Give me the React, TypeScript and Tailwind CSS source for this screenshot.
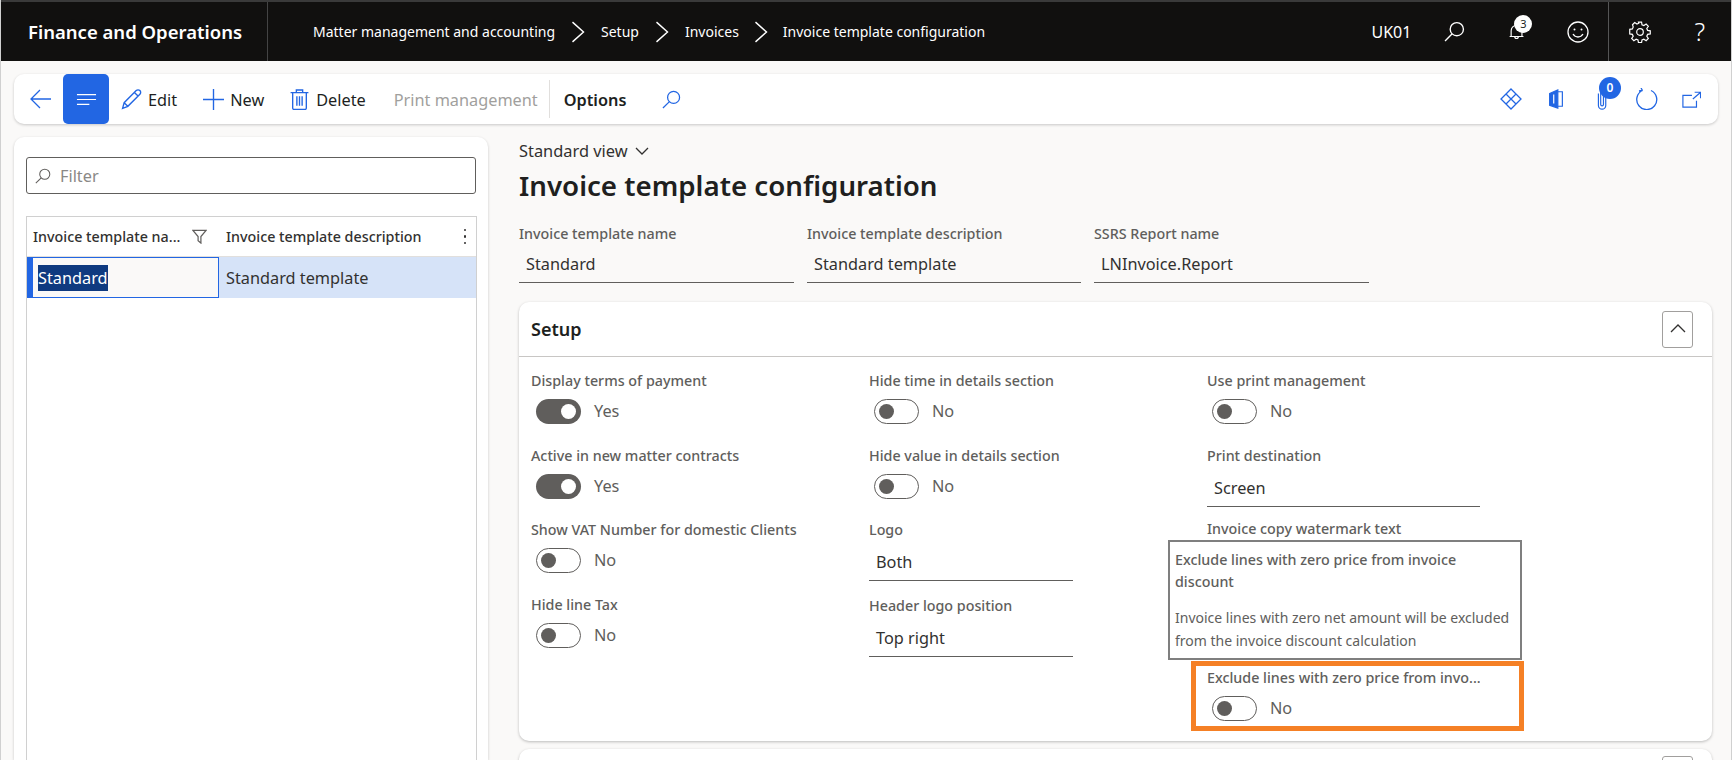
import type { ReactNode } from "react";

const blue = "#2266e3";

function Icon({ className, size = 20, children, stroke = "currentColor", vb = "0 0 20 20" }: { className?: string; size?: number; children: ReactNode; stroke?: string; vb?: string }) {
  return (
    <svg width={size} height={size} viewBox={vb} fill="none" stroke={stroke} strokeWidth="1.3" className={className}>
      {children}
    </svg>
  );
}

function SearchIcon({ size = 20, className }: { size?: number; className?: string }) {
  return (
    <Icon size={size} className={className}>
      <circle cx="12.2" cy="7.8" r="6.3" />
      <path d="M7.8 12.2 1 19" />
    </Icon>
  );
}

function Crumb({ className }: { className: string }) {
  return (
    <Icon size={22} className={className}>
      <path d="m5 1 10 9-10 9" />
    </Icon>
  );
}

function ToolButton({ icon, label, className }: { icon: ReactNode; label: string; className?: string }) {
  return (
    <div className={`flex items-center ${className ?? ""}`}>
      {icon}
      <span className="pt-[3px] text-[#201f1e]">{label}</span>
    </div>
  );
}

function Toggle({ on, className }: { on?: boolean; className?: string }) {
  return (
    <div className={`flex items-center ${className ?? ""}`}>
      {on ? (
        <div className="ml-[5px] flex h-[25px] w-[45px] items-center justify-end rounded-full bg-[#605e5c] pr-[5px]">
          <div className="size-[15px] rounded-full bg-white" />
        </div>
      ) : (
        <div className="ml-[5px] flex h-[25px] w-[45px] items-center rounded-full border border-[#605e5c] bg-white pl-[4px]">
          <div className="size-[15px] rounded-full bg-[#605e5c]" />
        </div>
      )}
      <span className="ml-[13px] text-[16.3px] leading-[31px] text-[#605e5c]">{on ? "Yes" : "No"}</span>
    </div>
  );
}

function Label({ children }: { children: ReactNode }) {
  return <div className="h-[22px] text-[14.3px] leading-[22px] font-medium whitespace-nowrap text-[#605e5c]">{children}</div>;
}

function ToggleField({ label, on }: { label: string; on?: boolean }) {
  return (
    <div className="h-[74.7px]">
      <Label>{label}</Label>
      <Toggle on={on} className="mt-[4px]" />
    </div>
  );
}

function InputField({ label, value, width, height = "h-[76px]" }: { label: string; value: string; width: string; height?: string }) {
  return (
    <div className={height}>
      <Label>{label}</Label>
      <div className={`mt-[4px] h-[36px] border-b border-[#605e5c] pl-[7px] text-[16.3px] leading-[34px] text-[#323130] ${width}`}>{value}</div>
    </div>
  );
}

function HeadField({ label, value, width }: { label: string; value: string; width: string }) {
  return (
    <div className={width}>
      <Label>{label}</Label>
      <div className="mt-[2px] h-[36px] border-b border-[#605e5c] pl-[7px] text-[16.3px] leading-[35px] text-[#323130]">{value}</div>
    </div>
  );
}

function TopBar() {
  return (
    <header className="flex h-[61px] shrink-0 items-center border-t-2 border-[#3a3a3a] bg-[#11100f] text-white">
      <div className="flex h-full w-[267px] items-center border-r border-[#444] pl-[27px] text-[18.5px] font-semibold whitespace-nowrap">Finance and Operations</div>
      <nav className="ml-[45px] flex items-center text-[14px] whitespace-nowrap">
        <span>Matter management and accounting</span>
        <Crumb className="mx-[12px]" />
        <span>Setup</span>
        <Crumb className="mx-[12px]" />
        <span>Invoices</span>
        <Crumb className="mx-[11px]" />
        <span>Invoice template configuration</span>
      </nav>
      <div className="ml-auto flex h-full items-center">
        <span className="text-[16px]">UK01</span>
        <SearchIcon size={21} className="ml-[33px]" />
        <div className="relative ml-[43px] flex h-full w-[22px] items-center">
          <Icon size={18}>
            <path d="M3.5 15V8.5a6 6 0 0 1 12 0V15M1.8 15h15.4M7.5 15c0 3 4 3 4 0" />
          </Icon>
          <div className="absolute top-[13px] left-[6px] flex size-[18px] items-center justify-center rounded-full bg-white text-[11px] text-[#201f1e]">3</div>
        </div>
        <Icon size={22} className="ml-[37px]" vb="0 0 22 22">
          <circle cx="11" cy="11" r="10" />
          <circle cx="7.5" cy="8.5" r="1" fill="white" stroke="none" />
          <circle cx="14.5" cy="8.5" r="1" fill="white" stroke="none" />
          <path d="M6 13c2.5 4 7.5 4 10 0" />
        </Icon>
        <div className="ml-[19px] h-full w-px bg-[#555]" />
        <Icon size={22} className="ml-[20px]" vb="0 0 24 24">
          <path d="M10.3 1.8h3.4l.5 2.9 2 .9 2.5-1.7 2.4 2.4-1.7 2.5.9 2 2.9.5v3.4l-2.9.5-.9 2 1.7 2.5-2.4 2.4-2.5-1.7-2 .9-.5 2.9h-3.4l-.5-2.9-2-.9-2.5 1.7-2.4-2.4 1.7-2.5-.9-2-2.9-.5V9.700l2.900-.5.900-2L3.800 4.700l2.400-2.400 2.500 1.700 2-.9z" transform="translate(0 -.6)" />
          <circle cx="12" cy="12" r="3.600" />
        </Icon>
        <span className="mr-[26px] ml-[43px] text-[25px] leading-none font-light">?</span>
      </div>
    </header>
  );
}

function Toolbar() {
  return (
    <div className="mx-[13px] mt-[13px] flex h-[50px] shrink-0 items-center rounded-[10px] bg-white text-[16.3px] shadow-[0_1px_3px_rgba(0,0,0,0.2)]">
      <Icon size={22} stroke={blue} className="ml-[16px]" vb="0 0 22 22">
        <path d="M21 11H1.500M10 2l-9 9 9 9" />
      </Icon>
      <div className="ml-[11px] flex h-full w-[46px] items-center justify-center rounded-[5px] bg-[#2266e3]">
        <Icon size={21} stroke="white" vb="0 0 22 22">
          <path d="M1 6h20M1 11h20M1 16h13" />
        </Icon>
      </div>
      <ToolButton
        className="ml-[12px]"
        label="Edit"
        icon={
          <Icon size={21} stroke={blue} className="mr-[6px]">
            <path d="M1.500 18.500 3 13 14.500 1.500a2 2 0 0 1 3.500 3.500L6.500 16.500zM3 13l3.500 3.500M13 3.500l3.500 3.500" />
          </Icon>
        }
      />
      <ToolButton
        className="ml-[26px]"
        label="New"
        icon={
          <Icon size={21} stroke={blue} className="mr-[6px]">
            <path d="M10 0v20M0 10h20" />
          </Icon>
        }
      />
      <ToolButton
        className="ml-[25px]"
        label="Delete"
        icon={
          <Icon size={21} stroke={blue} className="mr-[6px]">
            <path d="M1.500 3.500h17M7 3.500V1h6v2.500M3.500 3.500V18a1.500 1.500 0 0 0 1.500 1.500h10a1.500 1.500 0 0 0 1.500-1.500V3.500M7.500 7v9M10 7v9M12.500 7v9" />
          </Icon>
        }
      />
      <span className="ml-[28px] pt-[3px] whitespace-nowrap text-[#a19f9d]">Print management</span>
      <div className="ml-[11px] h-[38px] w-px bg-[#e1dfdd]" />
      <span className="ml-[14px] pt-[3px] font-semibold text-[#201f1e]">Options</span>
      <SearchIcon size={19} className="ml-[36px] text-[#2266e3]" />
      <div className="mr-[17px] ml-auto flex items-center">
        <Icon size={22} stroke={blue} vb="0 0 22 22">
          <path d="M11 1 21 11 11 21 1 11zM6 6l10 10M16 6 6 16" />
        </Icon>
        <Icon size={20} stroke={blue} className="ml-[24px]" vb="0 0 18 22">
          <path d="M2 5 11 1v20l-9-3z" fill={blue} />
          <path d="M11 3h5v16h-5" />
          <path d="M6.500 6v10" stroke="white" />
        </Icon>
        <div className="relative ml-[29px] flex w-[30px] items-center">
          <Icon size={22} stroke={blue} className="-ml-[3px] shrink-0" vb="0 0 16 24">
            <path d="M3 6v13a4 4 0 0 0 8 0V4a3 3 0 0 0-5.500 0v14a1.500 1.500 0 0 0 3 0V7" />
          </Icon>
          <div className="absolute -top-[11px] left-[4px] flex size-[22px] items-center justify-center rounded-full bg-[#2266e3] text-[12px] font-semibold text-white">0</div>
        </div>
        <Icon size={22} stroke={blue} className="ml-[11px]" vb="0 0 22 22">
          <path d="M6.500 2.500a10 10 0 1 0 8.500 0M6.500 2.500 5 0M6.500 2.500 3 3" />
        </Icon>
        <Icon size={19} stroke={blue} className="ml-[24px]" vb="0 0 21 21">
          <path d="M11 6H1v13h15v-7M12 10l8-7M14 2.500h6.500V9" />
        </Icon>
      </div>
    </div>
  );
}

function ListPanel() {
  return (
    <aside className="ml-[13px] w-[474px] shrink-0 rounded-t-[10px] bg-white px-[12px] pt-[20px] shadow-[0_1px_3px_rgba(0,0,0,0.2)]">
      <div className="flex h-[37px] items-center rounded-[3px] border border-[#605e5c] pl-[8px] text-[16.3px] text-[#8a8886]">
        <SearchIcon size={16} className="mr-[9px] text-[#605e5c]" />
        <span className="pt-[2px]">Filter</span>
      </div>
      <div className="mt-[22px] h-[560px] w-[451px] border border-b-0 border-[#d0d0d0]">
        <div className="flex h-[40px] items-center border-b border-[#e1dfdd] text-[14.3px] font-medium text-[#323130]">
          <span className="ml-[6px] w-[159px] whitespace-nowrap">Invoice template na...</span>
          <Icon size={15} stroke="#605e5c" vb="0 0 16 16">
            <path d="M1 1.500h14L9.500 8v7L6.500 12.500V8z" />
          </Icon>
          <span className="ml-[19px] whitespace-nowrap">Invoice template description</span>
          <div className="ml-auto mr-[10px] flex flex-col gap-[4px]">
            <div className="size-[2.500px] rounded-full bg-[#323130]" />
            <div className="size-[2.500px] rounded-full bg-[#323130]" />
            <div className="size-[2.500px] rounded-full bg-[#323130]" />
          </div>
        </div>
        <div className="flex h-[41px] border-l-[5px] border-[#2266e3] bg-[#d6e3f8]">
          <div className="flex w-[187px] items-center border border-[#2266e3] bg-[#faf9f8] pl-[5px]">
            <span className="bg-[#0f3a80] text-[16.3px] leading-[26px] text-white">Standard</span>
          </div>
          <div className="flex items-center pt-[2px] pl-[7px] text-[16.3px] text-[#323130]">Standard template</div>
        </div>
      </div>
    </aside>
  );
}

function SetupCard() {
  return (
    <section className="relative mt-[19px] h-[439px] rounded-[10px] bg-white shadow-[0_1px_3px_rgba(0,0,0,0.25)]">
      <div className="flex h-[55px] items-center justify-between border-b border-[#c8c6c4] pr-[19px] pl-[12px]">
        <span className="text-[18px] font-semibold text-[#201f1e]">Setup</span>
        <div className="flex h-[37px] w-[31px] items-center justify-center rounded-[3px] border border-[#a19f9d]">
          <Icon size={16} stroke="#323130" vb="0 0 16 16">
            <path d="m1 11 7-7 7 7" />
          </Icon>
        </div>
      </div>
      <div className="grid grid-cols-[338px_338px_338px] pt-[13px] pl-[12px]">
        <div>
          <ToggleField label="Display terms of payment" on />
          <ToggleField label="Active in new matter contracts" on />
          <ToggleField label="Show VAT Number for domestic Clients" />
          <ToggleField label="Hide line Tax" />
        </div>
        <div>
          <ToggleField label="Hide time in details section" />
          <ToggleField label="Hide value in details section" />
          <InputField label="Logo" value="Both" width="w-[204px]" />
          <InputField label="Header logo position" value="Top right" width="w-[204px]" />
        </div>
        <div>
          <ToggleField label="Use print management" />
          <InputField label="Print destination" value="Screen" width="w-[273px]" height="h-[73px]" />
          <div className="h-[149px]">
            <Label>Invoice copy watermark text</Label>
          </div>
          <div className="w-[273px] truncate">
            <Label>Exclude lines with zero price from invo...</Label>
            <Toggle className="mt-[4px]" />
          </div>
        </div>
      </div>
      {/* hover tooltip over the third column */}
      <div className="absolute top-[238px] left-[649px] h-[120px] w-[354px] border-2 border-[#7f7f7f] bg-white px-[5px] pt-[7px] text-[14.3px] leading-[22px] text-[#605e5c]">
        <div className="font-medium">Exclude lines with zero price from invoice discount</div>
        <div className="mt-[13px] text-[14px] leading-[23px]">Invoice lines with zero net amount will be excluded from the invoice discount calculation</div>
      </div>
      <div className="absolute top-[359px] left-[672px] h-[70px] w-[333px] border-[5px] border-[#f58025]" />
    </section>
  );
}

export default function App() {
  return (
    <div className="flex h-[760px] w-full flex-col overflow-hidden border-x border-[#d0d0d0] bg-[#faf9f8] font-['Noto_Sans',sans-serif]">
      <TopBar />
      <Toolbar />
      <div className="mt-[13px] flex min-h-0 flex-1">
        <ListPanel />
        <main className="mr-[19px] ml-[31px] min-w-0 flex-1">
          <div className="flex items-center text-[16.4px] leading-[28px] text-[#323130]">
            Standard view
            <Icon size={14} stroke="#323130" className="ml-[7px]" vb="0 0 14 14">
              <path d="m1 4 6 6 6-6" />
            </Icon>
          </div>
          <h1 className="text-[27.7px] leading-[40px] font-semibold whitespace-nowrap text-[#201f1e]">Invoice template configuration</h1>
          <div className="mt-[18px] flex gap-[13px]">
            <HeadField label="Invoice template name" value="Standard" width="w-[275px]" />
            <HeadField label="Invoice template description" value="Standard template" width="w-[274px]" />
            <HeadField label="SSRS Report name" value="LNInvoice.Report" width="w-[275px]" />
          </div>
          <SetupCard />
          <section className="relative mt-[8px] h-[40px] rounded-t-[10px] bg-white shadow-[0_1px_3px_rgba(0,0,0,0.25)]">
            <div className="absolute top-[7px] right-[19px] h-[37px] w-[31px] rounded-[3px] border border-[#a19f9d]" />
          </section>
        </main>
      </div>
    </div>
  );
}
